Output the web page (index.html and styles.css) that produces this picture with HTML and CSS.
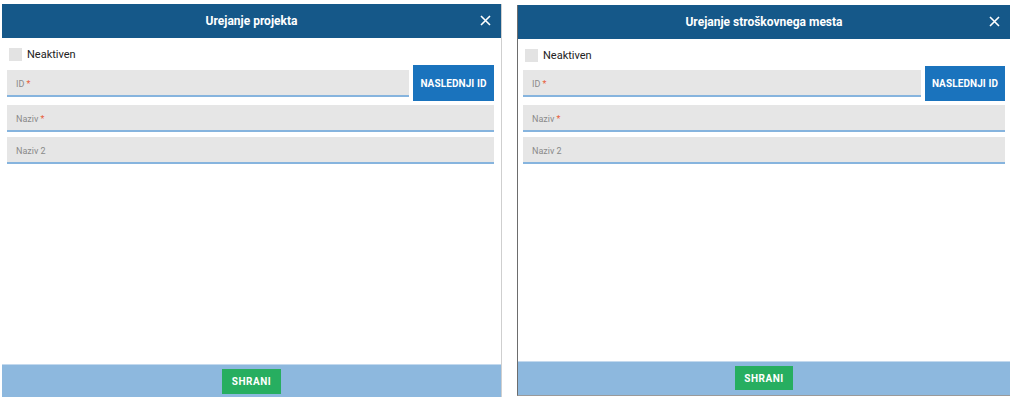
FILE: index.html
```html
<!DOCTYPE html>
<html>
<head>
<title>Urejanje</title>
<link rel="stylesheet" href="styles.css">
</head>
<body>

<div class="dialog dialog-left">
  <div class="dialog-header">
    <span class="dialog-title">Urejanje projekta</span>
    <svg class="dialog-close" width="11" height="11" viewBox="0 0 11 11"><path d="M1 1L10 10M10 1L1 10" stroke="#ffffff" stroke-width="1.6"/></svg>
  </div>
  <div class="dialog-body">
    <label class="check-row"><span class="check-box"></span>Neaktiven</label>
    <div class="id-row">
      <div class="field"><span class="field-label">ID <b>*</b></span></div>
      <button class="btn-next">NASLEDNJI ID</button>
    </div>
    <div class="field field-wide"><span class="field-label">Naziv <b>*</b></span></div>
    <div class="field field-wide"><span class="field-label">Naziv 2</span></div>
  </div>
  <div class="dialog-footer">
    <button class="btn-save">SHRANI</button>
  </div>
</div>

<div class="dialog dialog-right">
  <div class="dialog-header">
    <span class="dialog-title">Urejanje stroškovnega mesta</span>
    <svg class="dialog-close" width="11" height="11" viewBox="0 0 11 11"><path d="M1 1L10 10M10 1L1 10" stroke="#ffffff" stroke-width="1.6"/></svg>
  </div>
  <div class="dialog-body">
    <label class="check-row"><span class="check-box"></span>Neaktiven</label>
    <div class="id-row">
      <div class="field"><span class="field-label">ID <b>*</b></span></div>
      <button class="btn-next">NASLEDNJI ID</button>
    </div>
    <div class="field field-wide"><span class="field-label">Naziv <b>*</b></span></div>
    <div class="field field-wide"><span class="field-label">Naziv 2</span></div>
  </div>
  <div class="dialog-footer">
    <button class="btn-save">SHRANI</button>
  </div>
</div>

</body>
</html>
```

FILE: styles.css
```css
body {
    margin: 0;
    display: flex;
    align-items: flex-start;
    background-color: #ffffff;
    font-family: Roboto, 'Liberation Sans', sans-serif;
}
.dialog {
    display: flex;
    flex-direction: column;
    background-color: #ffffff;
}
.dialog-left {
    margin: 4px 0 0 2px;
    width: 499px;
    height: 393px;
    border-right: 1px solid #cfcfcf;
}
.dialog-right {
    margin: 5px 0 0 15px;
    width: 492px;
    height: 390px;
    border-left: 1px solid #6d6d6d;
    border-bottom: 1px solid #9a9a9a;
}
.dialog-header {
    position: relative;
    height: 34px;
    background-color: #155889;
    display: flex;
    align-items: center;
    justify-content: center;
    color: #ffffff;
}
.dialog-title {
    font-size: 12px;
    font-weight: bold;
}
.dialog-close {
    position: absolute;
    right: 10px;
    top: 11px;
}
.dialog-body {
    flex: 1;
    padding: 10px 7px 0 5px;
}
.dialog-right .dialog-body {
    padding-right: 5px;
}
.check-row {
    display: flex;
    align-items: center;
    height: 13px;
    margin-left: 2px;
    font-size: 11px;
    color: #222222;
}
.check-box {
    width: 13px;
    height: 13px;
    margin-right: 5px;
    background-color: #e3e3e3;
}
.id-row {
    display: flex;
    align-items: center;
    gap: 4px;
    margin-top: 4px;
    margin-bottom: 4px;
}
.field {
    flex: 1;
    height: 25px;
    background-color: #e6e6e6;
    border-bottom: 2px solid #86b4de;
    display: flex;
    align-items: center;
    padding-left: 9px;
}
.field-wide {
    margin-bottom: 5px;
}
.field-label {
    font-size: 9px;
    color: #8a8a8a;
    padding-top: 3px;
}
.field-label b {
    font-weight: normal;
    color: #e8603c;
}
.btn-next {
    width: 81px;
    height: 36px;
    border: none;
    background-color: #1a73bd;
    color: #ffffff;
    font-family: Roboto, 'Liberation Sans', sans-serif;
    font-size: 10px;
    font-weight: bold;
    letter-spacing: 0.1px;
    padding: 0;
}
.dialog-right .btn-next {
    width: 80px;
    height: 35px;
}
.dialog-footer {
    height: 32px;
    background-color: #8db8de;
    border-top: 1px solid #c3d9ee;
    display: flex;
    justify-content: center;
    padding-top: 4px;
    box-sizing: border-box;
}
.dialog-left .dialog-footer {
    height: 33px;
}
.dialog-right .dialog-footer {
    height: 34px;
}
.btn-save {
    width: 59px;
    height: 25px;
    border: none;
    background-color: #27ae60;
    color: #ffffff;
    font-family: Roboto, 'Liberation Sans', sans-serif;
    font-size: 10px;
    font-weight: bold;
    letter-spacing: 0.5px;
    padding: 0;
}
.dialog-right .btn-save {
    width: 58px;
    height: 24px;
}
```
